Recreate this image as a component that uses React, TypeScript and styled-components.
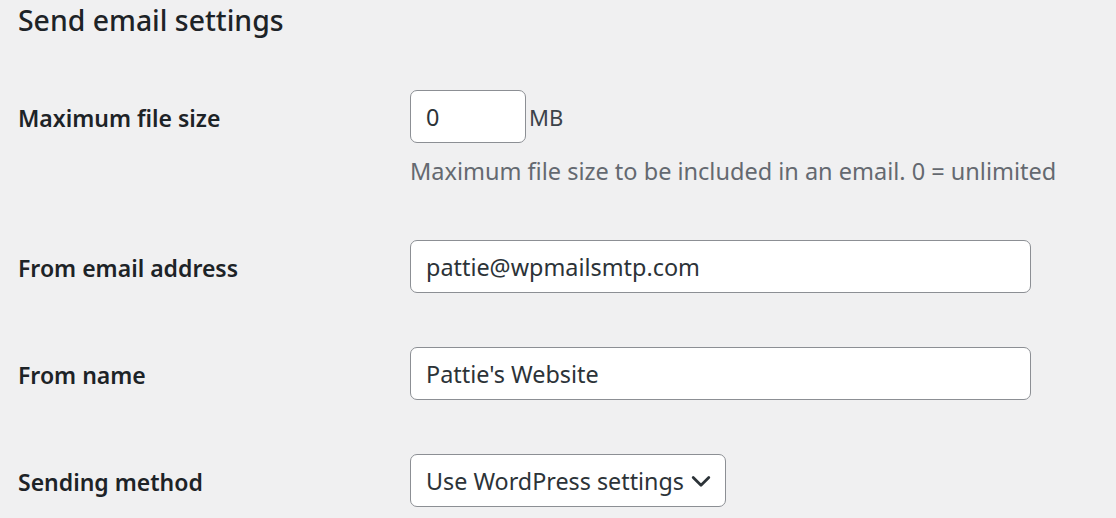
import styled, { createGlobalStyle } from 'styled-components';

const GlobalStyle = createGlobalStyle`
  html, body {
    margin: 0;
    padding: 0;
    background: #f0f0f1;
  }
  body {
    font-family: "Noto Sans", "Open Sans", sans-serif;
    color: #1d2327;
  }
`;

const Page = styled.div`
  padding: 0 18px;
`;

const Title = styled.h2`
  margin: 0;
  padding-top: 2px;
  font-size: 28.4px;
  font-weight: 500;
  line-height: 36px;
  color: #1d2327;
`;

const Form = styled.div`
  display: grid;
  grid-template-columns: 392px 1fr;
  margin-top: 25px;
`;

const Label = styled.div`
  padding: 29px 0 25px;
  font-size: 23px;
  font-weight: 600;
  line-height: 53px;
  color: #1d2327;
`;

const Field = styled.div`
  padding: 27px 0;
`;

const Inline = styled.div`
  display: flex;
  align-items: center;
  gap: 3px;
`;

const TextInput = styled.input<{ $width: number }>`
  box-sizing: border-box;
  width: ${(p) => p.$width}px;
  height: 53px;
  padding: 0 15px;
  border: 1px solid #8c8f94;
  border-radius: 7px;
  background: #fff;
  font-family: inherit;
  font-size: 23.4px;
  color: #2c3338;
  outline: none;
`;

const Unit = styled.span`
  font-size: 22px;
  color: #3c434a;
`;

const Description = styled.p`
  margin: 13px 0 0;
  font-size: 23.5px;
  line-height: 30px;
  color: #646970;
`;

const SelectBox = styled.div`
  box-sizing: border-box;
  display: inline-flex;
  align-items: center;
  justify-content: space-between;
  width: 316px;
  height: 53px;
  padding: 0 12px 0 15px;
  border: 1px solid #8c8f94;
  border-radius: 7px;
  background: #fff;
  font-size: 23.3px;
  color: #2c3338;
`;

const Chevron = () => (
  <svg width="24" height="24" viewBox="0 0 20 20" fill="none">
    <path d="M3.5 7l6.5 6.5 6.5-6.5" stroke="#2c3338" strokeWidth="2.3" strokeLinecap="round" strokeLinejoin="round" />
  </svg>
);

export default function App() {
  return (
    <Page>
      <GlobalStyle />
      <Title>Send email settings</Title>
      <Form>
        <Label>Maximum file size</Label>
        <Field>
          <Inline>
            <TextInput $width={116} defaultValue="0" />
            <Unit>MB</Unit>
          </Inline>
          <Description>Maximum file size to be included in an email. 0 = unlimited</Description>
        </Field>

        <Label>From email address</Label>
        <Field>
          <TextInput $width={621} defaultValue="pattie@wpmailsmtp.com" />
        </Field>

        <Label>From name</Label>
        <Field>
          <TextInput $width={621} defaultValue="Pattie's Website" />
        </Field>

        <Label>Sending method</Label>
        <Field>
          <SelectBox>
            <span>Use WordPress settings</span>
            <Chevron />
          </SelectBox>
        </Field>
      </Form>
    </Page>
  );
}
